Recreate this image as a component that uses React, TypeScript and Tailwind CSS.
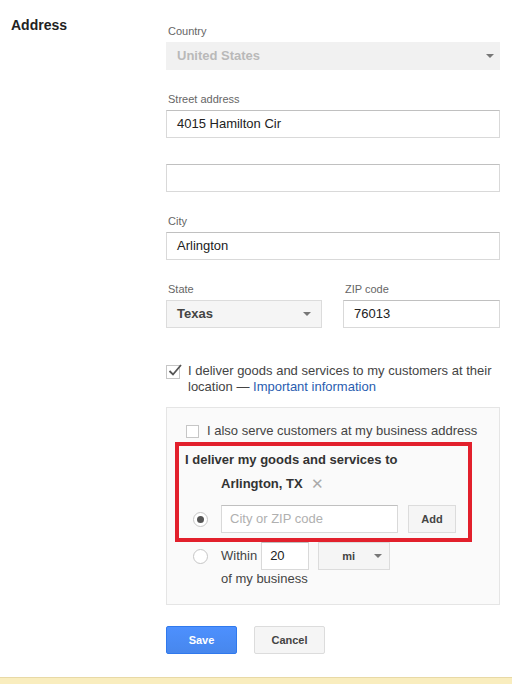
import React from "react";

const Caret = () => (
  <svg width="8" height="4" viewBox="0 0 8 4" className="shrink-0">
    <path d="M0 0 L8 0 L4 4 Z" fill="#777" />
  </svg>
);

const Label = ({ children }: { children: React.ReactNode }) => (
  <div className="text-[11px] leading-[14px] text-[#666] mb-[4px] pl-[2px]">{children}</div>
);

const TextBox = ({ value, className = "" }: { value?: string; className?: string }) => (
  <div
    className={
      "h-[28px] border border-[#d9d9d9] border-t-[#c0c0c0] bg-white flex items-center pl-[10px] text-[13px] text-[#222] " +
      className
    }
  >
    {value}
  </div>
);

const Radio = ({ checked }: { checked?: boolean }) => (
  <div className="w-[15px] h-[15px] rounded-full border border-[#c6c6c6] bg-white flex items-center justify-center shrink-0">
    {checked && <div className="w-[7px] h-[7px] rounded-full bg-[#555]" />}
  </div>
);

export default function App() {
  return (
    <div
      className="w-[512px] h-[684px] bg-white flex flex-col overflow-hidden text-[#333]"
      style={{ fontFamily: '"Liberation Sans", Arial, sans-serif' }}
    >
      <div className="flex flex-1">
        <div className="w-[166px] pl-[11px] pt-[17px]">
          <div className="text-[14px] leading-[16px] font-bold text-[#222]">Address</div>
        </div>

        <div className="w-[334px] pt-[24px]">
          <Label>Country</Label>
          <div className="h-[28px] bg-[#f1f1f1] flex items-center justify-between pl-[11px] pr-[6px] text-[13px] font-bold text-[#b9b9b9]">
            <span>United States</span>
            <Caret />
          </div>

          <div className="mt-[22px]">
            <Label>Street address</Label>
            <TextBox value="4015 Hamilton Cir" />
          </div>
          <TextBox className="mt-[26px]" />

          <div className="mt-[22px]">
            <Label>City</Label>
            <TextBox value="Arlington" />
          </div>

          <div className="mt-[22px] flex gap-[21px]">
            <div className="w-[156px]">
              <Label>State</Label>
              <div className="h-[28px] bg-[#f5f5f5] border border-[#dcdcdc] flex items-center justify-between pl-[10px] pr-[10px] text-[13px] font-bold text-[#444]">
                <span>Texas</span>
                <Caret />
              </div>
            </div>
            <div className="w-[157px]">
              <Label>ZIP code</Label>
              <TextBox value="76013" />
            </div>
          </div>

          <div className="mt-[35px] flex items-start gap-[8px]">
            <div className="relative w-[14px] h-[14px] mt-[2px] border border-[#c6c6c6] bg-white shrink-0">
              <svg width="16" height="15" viewBox="0 0 16 15" className="absolute left-[0px] top-[-3px]">
                <path d="M2.5 8 L6 11.5 L14 2" fill="none" stroke="#555" strokeWidth="1.8" />
              </svg>
            </div>
            <p className="text-[13px] leading-[16px] text-[#444]">
              I deliver goods and services to my customers at their location —{" "}
              <span className="text-[#2a5db0]">Important information</span>
            </p>
          </div>

          <div className="mt-[12px] h-[198px] border border-[#e5e5e5] bg-[#fafafa] pt-[16px]">
            <div className="flex items-center gap-[8px] pl-[19px] h-[14px]">
              <div className="w-[13px] h-[13px] border border-[#c6c6c6] bg-white shrink-0" />
              <span className="text-[13px] text-[#444]">I also serve customers at my business address</span>
            </div>

            <div className="ml-[8px] mt-[4px] w-[297px] h-[100px] border-4 border-[#e2202c] pt-[6px]">
              <div className="pl-[6px] text-[13px] leading-[16px] font-bold text-[#333]">
                I deliver my goods and services to
              </div>
              <div className="mt-[8px] pl-[42px] flex items-center text-[13px] leading-[16px] font-bold text-[#333]">
                Arlington, TX
                <span className="ml-[8px] text-[#aaa] font-normal text-[15px]">✕</span>
              </div>
              <div className="mt-[13px] flex items-center pl-[14px]">
                <Radio checked />
                <div className="ml-[13px] w-[177px] h-[28px] border border-[#d9d9d9] border-t-[#c0c0c0] bg-white flex items-center pl-[8px] text-[13px] text-[#b0b0b0]">
                  City or ZIP code
                </div>
                <div className="ml-[10px] w-[48px] h-[28px] border border-[#dcdcdc] bg-[#f5f5f5] flex items-center justify-center text-[11px] font-bold text-[#444]">
                  Add
                </div>
              </div>
            </div>

            <div className="flex items-center pl-[26px] h-[28px]">
              <Radio />
              <span className="ml-[13px] text-[13px] text-[#444]">Within</span>
              <div className="ml-[4px] w-[48px] h-[28px] border border-[#d9d9d9] border-t-[#c0c0c0] bg-white flex items-center pl-[8px] text-[13px] text-[#222]">
                20
              </div>
              <div className="ml-[9px] w-[72px] h-[28px] border border-[#dcdcdc] bg-[#f5f5f5] flex items-center justify-between pl-[23px] pr-[7px] text-[11px] font-bold text-[#444]">
                <span>mi</span>
                <Caret />
              </div>
            </div>
            <div className="pl-[54px] text-[13px] leading-[16px] text-[#444] mt-[1px]">of my business</div>
          </div>

          <div className="mt-[21px] flex gap-[17px]">
            <div className="w-[71px] h-[28px] rounded-[2px] border border-[#3079ed] bg-gradient-to-b from-[#4d90fe] to-[#4787ed] flex items-center justify-center text-[11px] font-bold text-white">
              Save
            </div>
            <div className="w-[71px] h-[28px] rounded-[2px] border border-[#dcdcdc] bg-[#f5f5f5] flex items-center justify-center text-[11px] font-bold text-[#444]">
              Cancel
            </div>
          </div>
        </div>
      </div>
      <div className="h-[7px] border-t border-[#e8d9a6] bg-[#f9edbe]" />
    </div>
  );
}
